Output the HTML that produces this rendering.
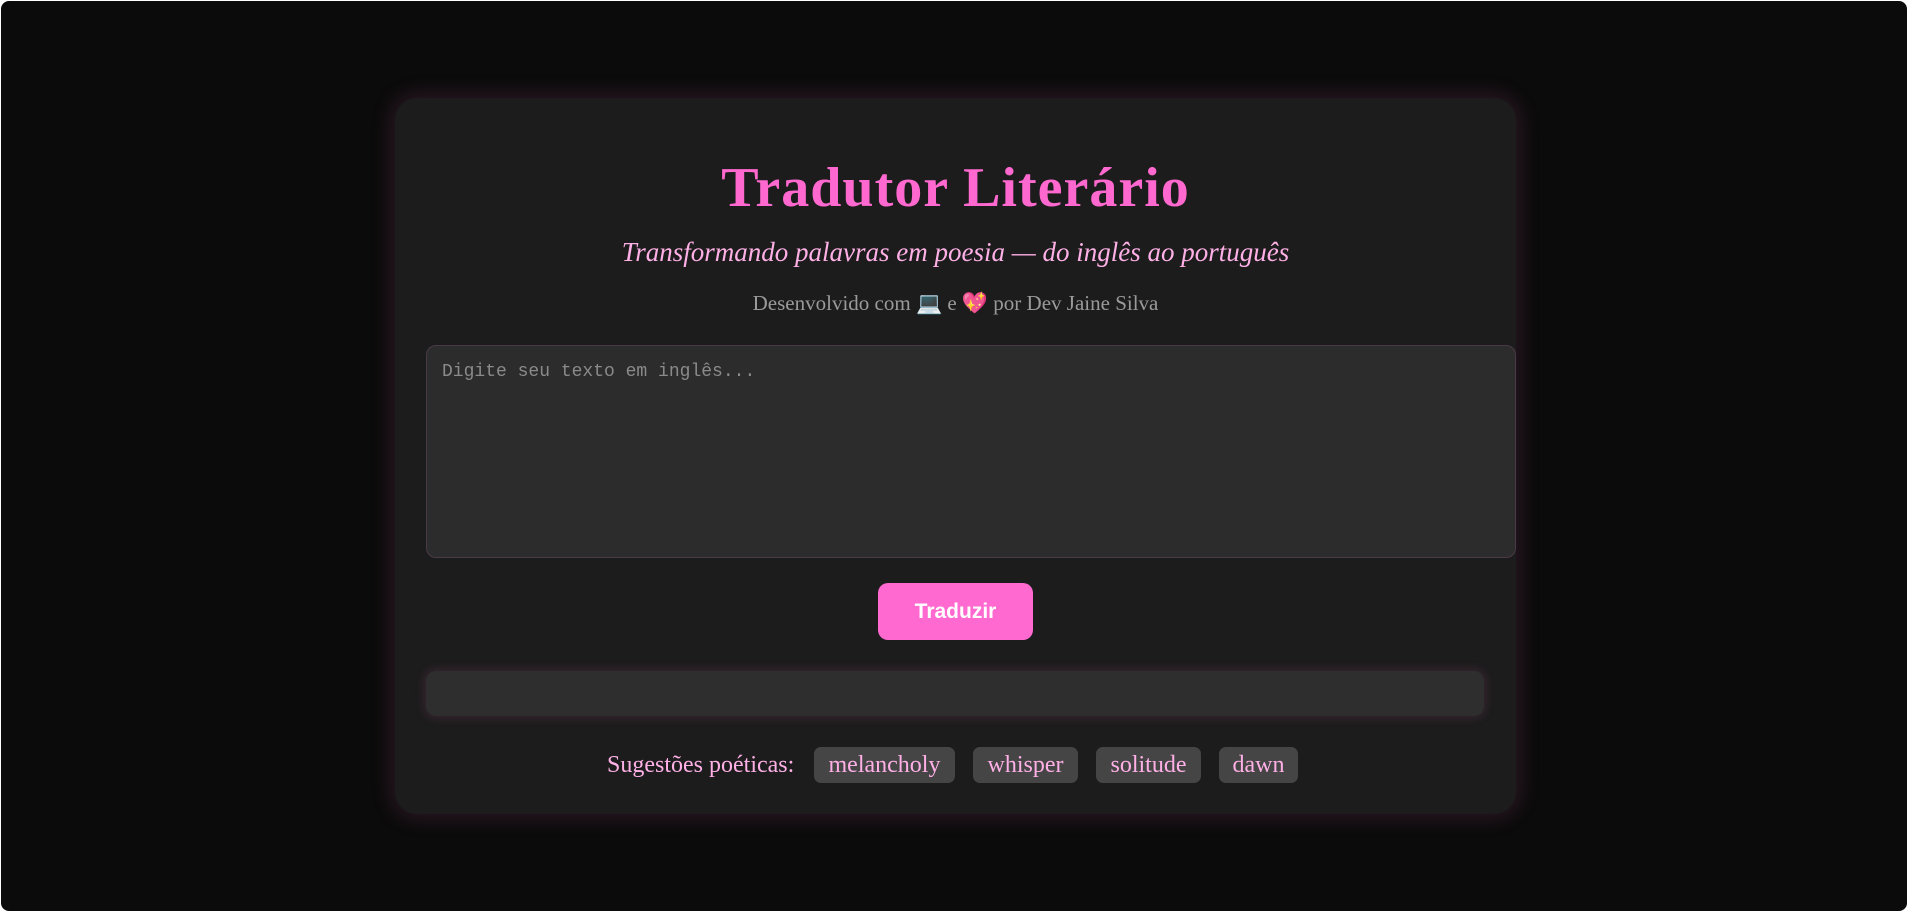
<!DOCTYPE html>
<html><head><meta charset="utf-8"><style>
html,body{margin:0;padding:0;background:#fff;}
.frame{position:absolute;left:1px;top:1px;width:1906px;height:910px;background:#0b0b0b;border-radius:8px;overflow:hidden;}
.card{position:absolute;left:394px;top:97px;width:1121px;height:716px;background:#1c1c1c;border-radius:22px;box-shadow:0 0 22px 4px rgba(255,105,200,0.13);}
h1{position:absolute;margin:0;text-align:center;font-family:"Liberation Serif",serif;font-size:56px;letter-spacing:1px;font-weight:bold;color:#ff69cf;}
.sub{position:absolute;top:236px;text-align:center;font-family:"Liberation Serif",serif;font-style:italic;font-size:27px;color:#ffb0e6;}
.cred{position:absolute;top:290px;text-align:center;font-family:"Liberation Serif",serif;font-size:21px;color:#9a9a9a;}
.ta{position:absolute;left:425px;top:344px;width:1090px;height:213px;background:#2c2c2c;border:1px solid #4a3a46;border-radius:10px;box-sizing:border-box;padding:16px 15px;font-family:"Liberation Mono",monospace;font-size:18px;color:#8a8a8a;}
.btn{position:absolute;left:877px;top:582px;width:155px;height:57px;background:#ff69d0;border-radius:10px;color:#fff;font-family:"Liberation Sans",sans-serif;font-weight:bold;font-size:21px;text-align:center;line-height:57px;}
.out{position:absolute;left:425px;top:670px;width:1058px;height:45px;background:#2e2e2e;border-radius:10px;box-shadow:0 0 10px 2px rgba(255,105,200,0.12);}
.sug{position:absolute;left:606px;top:746px;height:36px;font-family:"Liberation Serif",serif;font-size:24px;color:#ffb0e6;line-height:36px;}
.chip{position:absolute;top:746px;height:36px;background:#454545;border-radius:7px;color:#ffb0e6;font-family:"Liberation Serif",serif;font-size:24px;line-height:36px;text-align:center;}
</style></head><body>
<div class="frame">
<div class="card"></div>
<h1 style="left:394px;width:1121px;top:155px">Tradutor Literário</h1>
<div class="sub" style="left:394px;width:1121px">Transformando palavras em poesia — do inglês ao português</div>
<div class="cred" style="left:394px;width:1121px">Desenvolvido com 💻 e 💖 por Dev Jaine Silva</div>
<div class="ta">Digite seu texto em inglês...</div>
<div class="btn">Traduzir</div>
<div class="out"></div>
<div class="sug">Sugestões poéticas:</div>
<div class="chip" style="left:813px;width:141px">melancholy</div>
<div class="chip" style="left:972px;width:105px">whisper</div>
<div class="chip" style="left:1095px;width:105px">solitude</div>
<div class="chip" style="left:1218px;width:79px">dawn</div>
</div>
</body></html>
